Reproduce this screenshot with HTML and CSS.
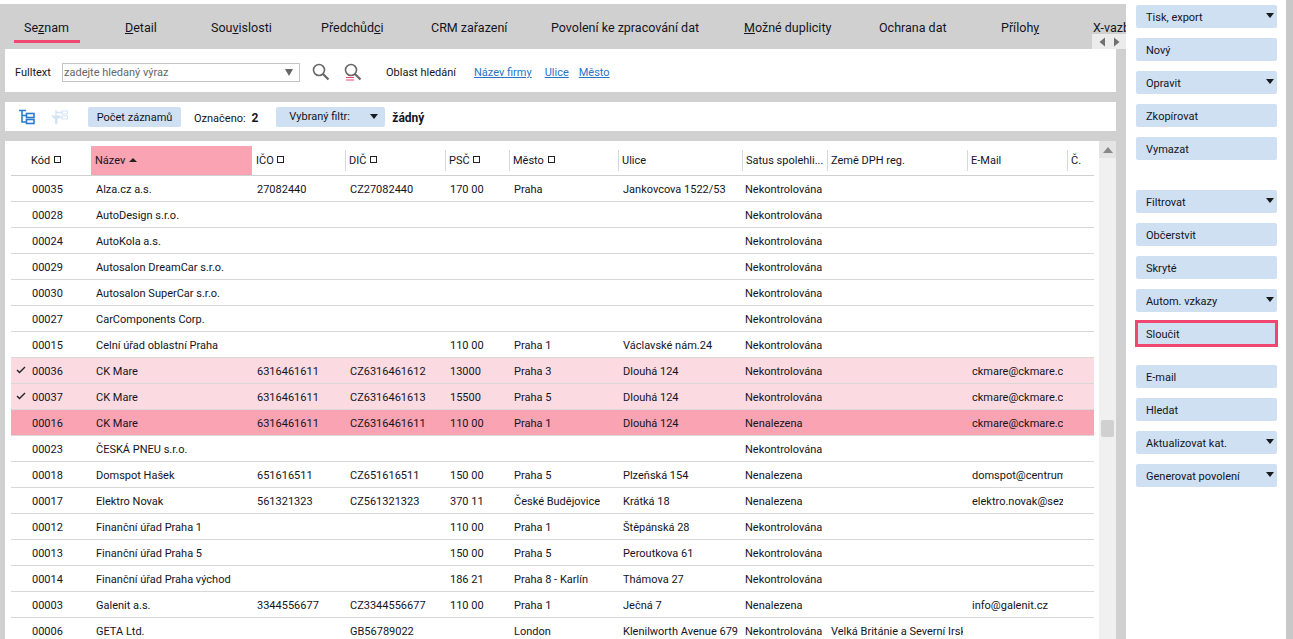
FILE: index.html
```html
<!DOCTYPE html>
<html lang="cs">
<head>
    <meta charset="UTF-8">
    <title>Seznam firem</title>
    <link rel="stylesheet" href="styles.css">
</head>
<body>
<div class="app">
    <div class="main">
        <div class="tabs">
            <div class="tab active">Se<u>z</u>nam</div>
            <div class="tab"><u>D</u>etail</div>
            <div class="tab">Sou<u>v</u>islosti</div>
            <div class="tab">Předchůd<u>c</u>i</div>
            <div class="tab">CRM zařazení</div>
            <div class="tab">Povolení ke zpracování dat</div>
            <div class="tab"><u>M</u>ožné duplicity</div>
            <div class="tab">Ochrana dat</div>
            <div class="tab">Příloh<u>y</u></div>
            <div class="tab">X-vazby</div>
        </div>
        <div class="tab-arrows">
            <svg width="10" height="12" viewBox="0 0 10 12"><path d="M8 1.5v9L2.5 6z" fill="#707070"/></svg>
            <svg width="10" height="12" viewBox="0 0 10 12"><path d="M2 1.5v9L7.5 6z" fill="#707070"/></svg>
        </div>

        <div class="panel search">
            <span class="search-label">Fulltext</span>
            <div class="search-box">
                <span>zadejte hledaný výraz</span>
                <span class="arrow gray"></span>
            </div>
            <svg class="search-icon" width="20" height="20" viewBox="0 0 20 20">
                <circle cx="8" cy="8" r="5.5" fill="none" stroke="#666" stroke-width="1.6"/>
                <path d="M12 12l5.5 5.5" stroke="#666" stroke-width="2.2"/>
            </svg>
            <svg class="search-icon second" width="20" height="20" viewBox="0 0 20 20">
                <circle cx="8" cy="8" r="5.5" fill="none" stroke="#666" stroke-width="1.6"/>
                <path d="M12 12l5.5 5.5" stroke="#666" stroke-width="2.2"/>
                <path d="M3 15.5h8M3 18h8" stroke="#ef476f" stroke-width="1"/>
            </svg>
            <span class="area-label">Oblast hledání</span>
            <a class="link first">Název firmy</a>
            <a class="link">Ulice</a>
            <a class="link last">Město</a>
        </div>

        <div class="panel toolbar">
            <svg class="tree-icon" width="16" height="16" viewBox="0 0 16 16" fill="none" stroke="#2a7bd0" stroke-width="1.6">
                <path d="M0 1.5h7M3 1.5v11.5h4M3 6.5h4"/>
                <rect x="7.5" y="4.5" width="7.5" height="4"/>
                <rect x="7.5" y="10.5" width="7.5" height="4"/>
            </svg>
            <svg class="filter-icon" width="18" height="16" viewBox="0 0 18 16" fill="none">
                <path d="M0 6.5h10L6.5 10.5v5L4 14.5v-4z" fill="#d3e4f5"/>
                <path d="M5 1v6M5 3.5h6M8 8.5h3" stroke="#d3e4f5" stroke-width="1.4"/>
                <rect x="11" y="2" width="5.5" height="3" stroke="#d3e4f5"/>
                <rect x="11" y="7" width="5.5" height="3" stroke="#d3e4f5"/>
            </svg>
            <div class="chip">Počet záznamů</div>
            <span class="marked">Označeno: <b>2</b></span>
            <div class="chip filter">Vybraný filtr:<span class="arrow"></span></div>
            <b class="filter-value">žádný</b>
        </div>

        <div class="panel grid-panel">
            <table class="grid">
                <colgroup>
                    <col class="c-check"><col class="c-code"><col class="c-name"><col class="c-ico"><col class="c-dic">
                    <col class="c-psc"><col class="c-city"><col class="c-street"><col class="c-status"><col class="c-vat">
                    <col class="c-mail"><col class="c-no">
                </colgroup>
                <thead>
                    <tr>
                        <th></th>
                        <th class="nosep">Kód <i class="box"></i></th>
                        <th class="sorted">Název <i class="sort-up"></i></th>
                        <th class="nosep">IČO <i class="box"></i></th>
                        <th>DIČ <i class="box"></i></th>
                        <th>PSČ <i class="box"></i></th>
                        <th>Město <i class="box"></i></th>
                        <th>Ulice</th>
                        <th>Satus spolehli...</th>
                        <th>Země DPH reg.</th>
                        <th>E-Mail</th>
                        <th>Č.</th>
                    </tr>
                </thead>
                <tbody>
                    <tr><td></td><td>00035</td><td>Alza.cz a.s.</td><td>27082440</td><td>CZ27082440</td><td>170 00</td><td>Praha</td><td>Jankovcova 1522/53</td><td>Nekontrolována</td><td></td><td></td><td></td></tr>
                    <tr><td></td><td>00028</td><td>AutoDesign s.r.o.</td><td></td><td></td><td></td><td></td><td></td><td>Nekontrolována</td><td></td><td></td><td></td></tr>
                    <tr><td></td><td>00024</td><td>AutoKola a.s.</td><td></td><td></td><td></td><td></td><td></td><td>Nekontrolována</td><td></td><td></td><td></td></tr>
                    <tr><td></td><td>00029</td><td>Autosalon DreamCar s.r.o.</td><td></td><td></td><td></td><td></td><td></td><td>Nekontrolována</td><td></td><td></td><td></td></tr>
                    <tr><td></td><td>00030</td><td>Autosalon SuperCar s.r.o.</td><td></td><td></td><td></td><td></td><td></td><td>Nekontrolována</td><td></td><td></td><td></td></tr>
                    <tr><td></td><td>00027</td><td>CarComponents Corp.</td><td></td><td></td><td></td><td></td><td></td><td>Nekontrolována</td><td></td><td></td><td></td></tr>
                    <tr><td></td><td>00015</td><td>Celní úřad oblastní Praha</td><td></td><td></td><td>110 00</td><td>Praha 1</td><td>Václavské nám.24</td><td>Nekontrolována</td><td></td><td></td><td></td></tr>
                    <tr class="marked-row"><td class="check"><svg width="10" height="8" viewBox="0 0 10 8"><path d="M1 4l2.5 2.5L9 1" fill="none" stroke="#222" stroke-width="1.4"/></svg></td><td>00036</td><td>CK Mare</td><td>6316461611</td><td>CZ6316461612</td><td>13000</td><td>Praha 3</td><td>Dlouhá 124</td><td>Nekontrolována</td><td></td><td><div class="cut">ckmare@ckmare.cz</div></td><td></td></tr>
                    <tr class="marked-row"><td class="check"><svg width="10" height="8" viewBox="0 0 10 8"><path d="M1 4l2.5 2.5L9 1" fill="none" stroke="#222" stroke-width="1.4"/></svg></td><td>00037</td><td>CK Mare</td><td>6316461611</td><td>CZ6316461613</td><td>15500</td><td>Praha 5</td><td>Dlouhá 124</td><td>Nekontrolována</td><td></td><td><div class="cut">ckmare@ckmare.cz</div></td><td></td></tr>
                    <tr class="current-row"><td></td><td>00016</td><td>CK Mare</td><td>6316461611</td><td>CZ6316461611</td><td>110 00</td><td>Praha 1</td><td>Dlouhá 124</td><td>Nenalezena</td><td></td><td><div class="cut">ckmare@ckmare.cz</div></td><td></td></tr>
                    <tr><td></td><td>00023</td><td>ČESKÁ PNEU s.r.o.</td><td></td><td></td><td></td><td></td><td></td><td>Nekontrolována</td><td></td><td></td><td></td></tr>
                    <tr><td></td><td>00018</td><td>Domspot Hašek</td><td>651616511</td><td>CZ651616511</td><td>150 00</td><td>Praha 5</td><td>Plzeňská 154</td><td>Nenalezena</td><td></td><td><div class="cut">domspot@centrum.cz</div></td><td></td></tr>
                    <tr><td></td><td>00017</td><td>Elektro Novak</td><td>561321323</td><td>CZ561321323</td><td>370 11</td><td>České Budějovice</td><td>Krátká 18</td><td>Nenalezena</td><td></td><td><div class="cut">elektro.novak@seznam.cz</div></td><td></td></tr>
                    <tr><td></td><td>00012</td><td>Finanční úřad Praha 1</td><td></td><td></td><td>110 00</td><td>Praha 1</td><td>Štěpánská 28</td><td>Nekontrolována</td><td></td><td></td><td></td></tr>
                    <tr><td></td><td>00013</td><td>Finanční úřad Praha 5</td><td></td><td></td><td>150 00</td><td>Praha 5</td><td>Peroutkova 61</td><td>Nekontrolována</td><td></td><td></td><td></td></tr>
                    <tr><td></td><td>00014</td><td>Finanční úřad Praha východ</td><td></td><td></td><td>186 21</td><td>Praha 8 - Karlín</td><td>Thámova 27</td><td>Nekontrolována</td><td></td><td></td><td></td></tr>
                    <tr><td></td><td>00003</td><td>Galenit a.s.</td><td>3344556677</td><td>CZ3344556677</td><td>110 00</td><td>Praha 1</td><td>Ječná 7</td><td>Nenalezena</td><td></td><td><div class="cut">info@galenit.cz</div></td><td></td></tr>
                    <tr><td></td><td>00006</td><td>GETA Ltd.</td><td></td><td>GB56789022</td><td></td><td>London</td><td>Klenilworth Avenue 679</td><td>Nekontrolována</td><td><div class="cut">Velká Británie a Severní Irsko</div></td><td></td><td></td></tr>
                </tbody>
            </table>
            <div class="scrollbar">
                <div class="scroll-up"><span class="arrow-up"></span></div>
                <div class="scroll-thumb"></div>
            </div>
        </div>
    </div>

    <div class="side">
        <div class="btn drop">Tisk, export</div>
        <div class="btn">Nový</div>
        <div class="btn drop">Opravit</div>
        <div class="btn">Zkopírovat</div>
        <div class="btn">Vymazat</div>
        <div class="btn drop group">Filtrovat</div>
        <div class="btn">Občerstvit</div>
        <div class="btn">Skryté</div>
        <div class="btn drop">Autom. vzkazy</div>
        <div class="btn highlighted">Sloučit</div>
        <div class="btn after-merge">E-mail</div>
        <div class="btn">Hledat</div>
        <div class="btn drop">Aktualizovat kat.</div>
        <div class="btn drop">Generovat povolení</div>
    </div>
    <div class="edge"></div>
</div>
</body>
</html>
```

FILE: styles.css
```css
html, body { margin: 0; height: 100%; overflow: hidden; background: #fff; }
body { font-family: Roboto, sans-serif; font-size: 11px; color: #14141e; }

.app { display: grid; grid-template-columns: 1126px 1fr 7px; height: 639px; }

.main { position: relative; margin-top: 4px; background: #d0d0d0; overflow: hidden; display: flex; flex-direction: column; }

.tabs { height: 45px; display: flex; font-size: 12.5px; flex: none; white-space: nowrap; }
.tab { padding-top: 16px; height: 29px; flex: none; }
.tab:nth-child(1) { margin-left: 14px; padding: 16px 10px 0; width: 46px; position: relative; }
.tab.active::after { content: ""; position: absolute; left: 0; right: 0; top: 36px; height: 3px; background: #ef476f; }
.tab:nth-child(2) { margin-left: 45px; width: 86px; }
.tab:nth-child(3) { width: 110px; }
.tab:nth-child(4) { width: 110px; }
.tab:nth-child(5) { width: 120px; }
.tab:nth-child(6) { width: 193px; }
.tab:nth-child(7) { width: 135px; }
.tab:nth-child(8) { width: 122px; }
.tab:nth-child(9) { width: 92px; }

.tab-arrows { position: absolute; left: 1092px; top: 30px; width: 34px; height: 15px; background: #ececec; display: flex; align-items: center; justify-content: center; gap: 5px; }

.panel { background: #fff; margin: 0 10px 0 5px; display: flex; align-items: center; flex: none; }

.search { height: 43px; box-sizing: border-box; padding-top: 4px; }
.search-label { margin-left: 10px; width: 47px; }
.search-box { width: 238px; height: 19px; box-sizing: border-box; border: 1px solid #c4c4c4; color: #666; padding-left: 1px; display: flex; align-items: center; justify-content: space-between; padding-right: 6px; }
.search-icon { margin-left: 11px; margin-top: -2px; }
.search-icon.second { margin-left: 12px; }
.area-label { margin-left: 23px; }
.link { color: #2a74c8; text-decoration: underline; margin-left: 13px; }
.link.first { margin-left: 18px; }
.link.last { margin-left: 10px; }

.arrow { display: inline-block; border-left: 4px solid transparent; border-right: 4px solid transparent; border-top: 5px solid #1a1a1a; }
.arrow.gray { border-top: 7px solid #666; }

.toolbar { height: 29px; margin-top: 10px; }
.tree-icon { margin-left: 14px; }
.filter-icon { margin-left: 16px; }
.chip { background: #cfe0f3; border-radius: 2px; height: 20px; line-height: 22px; margin-left: 19px; width: 93px; text-align: center; }
.marked { margin-left: 13px; padding-top: 2px; }
.marked b { margin-left: 3px; font-size: 12px; }
.chip.filter { margin-left: 18px; width: 109px; box-sizing: border-box; padding: 0 7px 0 13px; display: flex; align-items: center; justify-content: space-between; }
.filter-value { margin-left: 7px; font-size: 12px; padding-top: 2px; }

.grid-panel { margin-top: 10px; flex: 1; align-items: flex-start; position: relative; min-height: 0; padding: 5px 0 0 6px; }

.grid { border-collapse: collapse; table-layout: fixed; width: 1083px; flex: none; }
.c-check { width: 19px; }
.c-code { width: 61px; }
.c-name { width: 161px; }
.c-ico { width: 93px; }
.c-dic { width: 100px; }
.c-psc { width: 64px; }
.c-city { width: 109px; }
.c-street { width: 124px; }
.c-status { width: 85px; }
.c-vat { width: 140px; }
.c-mail { width: 100px; }
.c-no { width: 27px; }

.grid th { height: 29px; padding: 0 0 0 4px; box-sizing: border-box; font-weight: 400; text-align: left; white-space: nowrap; overflow: hidden; border-bottom: 1px solid #d0d0d0; background: linear-gradient(#d8d8d8, #d8d8d8) left center / 1px 21px no-repeat; }
.grid th:first-child, .grid th.nosep { background: none; }
.grid th:nth-child(2) { padding-left: 1px; }
.grid th.sorted { background: #f9a3b3; }
.grid td { height: 23px; padding: 2px 4px 0; white-space: nowrap; overflow: hidden; border-bottom: 1px solid #d8d8d8; }
.grid td:nth-child(2) { padding-left: 2px; }
.grid td:nth-child(3) { padding-left: 5px; }
.grid td:nth-child(4), .grid td:nth-child(5), .grid td:nth-child(6), .grid td:nth-child(7), .grid td:nth-child(8), .grid td:nth-child(11) { padding-left: 5px; }
.grid td:nth-child(9) { padding-left: 3px; padding-right: 0; }
.cut { overflow: hidden; }

.marked-row td { background: #fbdbe1; }
.current-row td { background: #f9a3b3; }
.grid td.check { text-align: center; padding: 0; line-height: 0; }

.box { display: inline-block; width: 5px; height: 5px; border: 1px solid #222; margin-left: 1px; vertical-align: 1px; }
.sort-up { display: inline-block; border-left: 4px solid transparent; border-right: 4px solid transparent; border-bottom: 4px solid #222; margin-left: 1px; vertical-align: 2px; }

.scrollbar { position: absolute; right: 0; top: 0; bottom: 0; width: 17px; background: #f0f0f0; }
.scroll-up { height: 17px; background: #e4e4e4; display: flex; align-items: center; justify-content: center; }
.arrow-up { border-left: 5px solid transparent; border-right: 5px solid transparent; border-bottom: 6px solid #888; }
.scroll-thumb { position: absolute; left: 2px; top: 279px; width: 13px; height: 17px; border-radius: 2px; background: #d0d0d0; }

.side { padding: 5px 9px 0 10px; display: flex; flex-direction: column; gap: 10px; }
.btn { position: relative; height: 23px; line-height: 25px; background: #cfe0f3; border-radius: 2px; padding-left: 10px; flex: none; }
.btn.drop::after { content: ""; position: absolute; right: 3px; top: 8px; border-left: 4px solid transparent; border-right: 4px solid transparent; border-top: 5px solid #1a1a1a; }
.btn.group { margin-top: 20px; }
.btn.highlighted { margin: -2px -1px 0; height: 27px; box-sizing: border-box; line-height: 23px; border: 3px solid #ef476f; border-radius: 0; padding-left: 8px; }
.btn.after-merge { margin-top: 8px; }

.edge { background: #c8c8c8; }
```
